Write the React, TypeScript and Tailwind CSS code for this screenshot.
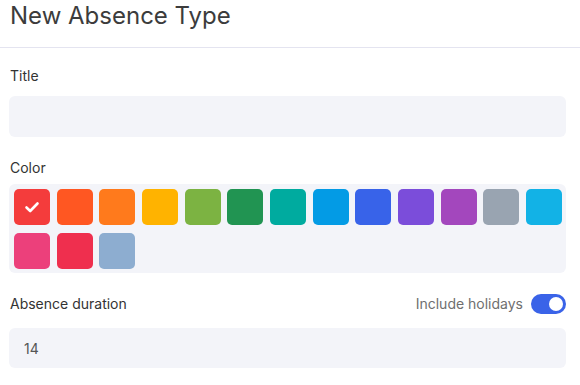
import React from "react";

const colors = [
  "#f43c3c",
  "#ff5722",
  "#ff7a1c",
  "#ffb300",
  "#7cb342",
  "#219452",
  "#00ab9f",
  "#039be5",
  "#3863e9",
  "#7b4dda",
  "#a347bd",
  "#99a4b1",
  "#12b2e6",
  "#ec407b",
  "#ef2f4e",
  "#8dadd0",
];

export default function App() {
  return (
    <div
      className="w-[580px] h-[385px] bg-white overflow-hidden text-[#333]"
      style={{ fontFamily: "Inter, 'Noto Sans', sans-serif" }}
    >
      <div className="h-[48px] border-b border-[#e4e4f0] pl-[10px]">
        <h1 className="text-[24px] leading-[32px] text-[#3c3c3c] font-normal">New Absence Type</h1>
      </div>
      <div className="px-[9px] pr-[14px]">
        <label className="block mt-[20px] pl-[1px] text-[14px] leading-[16px] text-[#333]">Title</label>
        <div className="mt-[12px] h-[41px] rounded-[6px] bg-[#f3f4f9]" />

        <label className="block mt-[23px] pl-[1px] text-[14px] leading-[16px] text-[#333]">Color</label>
        <div className="mt-[8px] rounded-[6px] bg-[#f3f4f9] pt-[5px] pb-[4px] pl-[5px] pr-[4px]">
          <div className="grid grid-cols-[repeat(13,36px)] justify-between gap-y-[8px]">
            {colors.map((c, i) => (
              <div
                key={c}
                className="w-[36px] h-[36px] rounded-[5px] flex items-center justify-center"
                style={{ backgroundColor: c }}
              >
                {i === 0 && (
                  <svg width="16" height="16" viewBox="0 0 16 16" fill="none">
                    <path
                      d="M2.5 8.5L6.2 12L13.5 4.5"
                      stroke="white"
                      strokeWidth="2.6"
                      strokeLinecap="round"
                      strokeLinejoin="round"
                    />
                  </svg>
                )}
              </div>
            ))}
          </div>
        </div>

        <div className="mt-[21px] flex items-center justify-between h-[20px]">
          <span className="pl-[1px] text-[14px] leading-[16px] text-[#333]">Absence duration</span>
          <div className="flex items-center gap-[8px]">
            <span className="text-[14px] leading-[16px] text-[#6f6f6f]">Include holidays</span>
            <div className="w-[35px] h-[20px] rounded-full bg-[#3a63e8] flex items-center justify-end pr-[3px]">
              <div className="w-[14px] h-[14px] rounded-full bg-white" />
            </div>
          </div>
        </div>
        <div className="mt-[14px] h-[40px] rounded-[6px] bg-[#f3f4f9] flex items-center pl-[15px] text-[14px] text-[#555]">
          14
        </div>
      </div>
    </div>
  );
}
